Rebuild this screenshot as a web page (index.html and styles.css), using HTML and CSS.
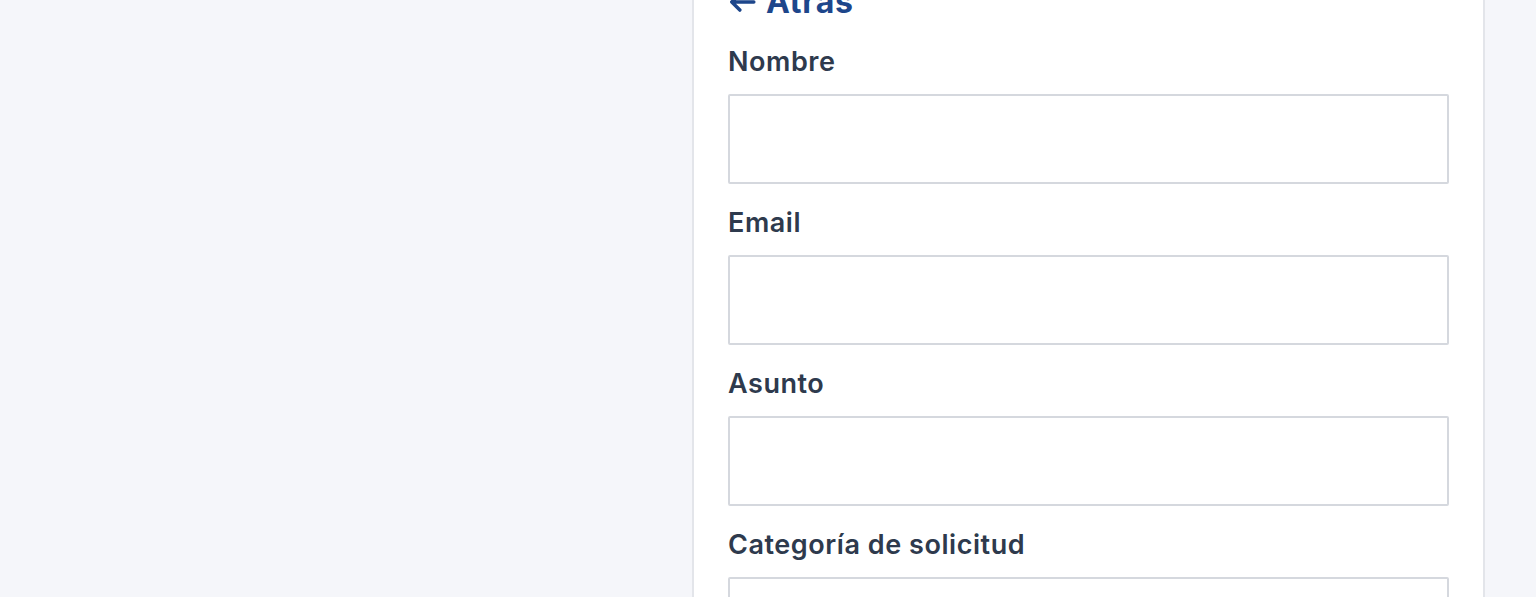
FILE: index.html
```html
<!DOCTYPE html>
<html lang="es">
<head>
<meta charset="utf-8">
<title>Contacto</title>
<link rel="stylesheet" href="styles.css">
</head>
<body>
<main class="layout">
  <div class="aside"></div>
  <section class="card">
    <a class="back" href="#">
      <svg class="back-icon" viewBox="0 0 26 24" width="28" height="26" aria-hidden="true"><path d="M24 12H4M11 4.5L3.5 12l7.5 7.5" fill="none" stroke="currentColor" stroke-width="3.2" stroke-linecap="round" stroke-linejoin="round"/></svg>
      <span>Atrás</span>
    </a>
    <form class="form">
      <div class="field">
        <label class="label" for="nombre">Nombre</label>
        <input class="input" id="nombre" type="text">
      </div>
      <div class="field">
        <label class="label" for="email">Email</label>
        <input class="input" id="email" type="email">
      </div>
      <div class="field">
        <label class="label" for="asunto">Asunto</label>
        <input class="input" id="asunto" type="text">
      </div>
      <div class="field">
        <label class="label" for="cat">Categoría de solicitud</label>
        <input class="input" id="cat" type="text">
      </div>
    </form>
  </section>
</main>
</body>
</html>
```

FILE: styles.css
```css
html, body {
  margin: 0;
  padding: 0;
  background: #f5f6fa;
  font-family: Inter, "Noto Sans", "Liberation Sans", sans-serif;
  overflow: hidden;
}

.layout {
  display: grid;
  grid-template-columns: 692px 793px;
  margin-top: -54px;
}

.card {
  box-sizing: border-box;
  background: #ffffff;
  border: 2px solid #e3e5ea;
  padding: 34px 34px 60px;
  min-height: 800px;
}

.back {
  display: flex;
  align-items: center;
  gap: 10px;
  height: 40px;
  color: #1d468b;
  text-decoration: none;
  font-size: 32px;
  font-weight: 700;
  line-height: 40px;
  letter-spacing: 0.8px;
}

.back-icon {
  flex: none;
}

.form {
  display: flex;
  flex-direction: column;
  gap: 21px;
  margin-top: 22px;
}

.field {
  display: flex;
  flex-direction: column;
}

.label {
  color: #2e3a4d;
  font-size: 27px;
  font-weight: 600;
  line-height: 36px;
  letter-spacing: 0.55px;
  margin-bottom: 14px;
}

.input {
  box-sizing: border-box;
  height: 90px;
  width: 100%;
  border: 2px solid #d5d8de;
  border-radius: 2px;
  background: #ffffff;
  font: inherit;
  margin: 0;
}
```
